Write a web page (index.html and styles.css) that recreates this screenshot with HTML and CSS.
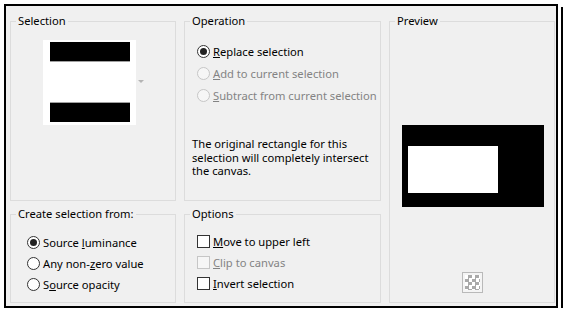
FILE: index.html
```html
<!DOCTYPE html>
<html lang="en">
<head>
  <meta charset="UTF-8" />
  <title>Selection From Mask</title>
  <link rel="stylesheet" href="styles.css">
</head>
<body>
  <div class="dialog">
    <div class="groups">
      <fieldset class="group g-selection">
        <legend>Selection</legend>
        <div class="selection-body">
          <div class="thumb">
            <div class="bar bar-top"></div>
            <div class="gap"></div>
            <div class="bar bar-bottom"></div>
          </div>
          <span class="drop-arrow"></span>
        </div>
      </fieldset>

      <fieldset class="group g-operation">
        <legend>Operation</legend>
        <div class="operation-body">
          <div class="choices wide">
            <label class="choice"><span class="radio checked"></span><span><u>R</u>eplace selection</span></label>
            <label class="choice disabled"><span class="radio"></span><span><u>A</u>dd to current selection</span></label>
            <label class="choice disabled"><span class="radio"></span><span><u>S</u>ubtract from current selection</span></label>
          </div>
          <p class="info">The original rectangle for this<br>selection will completely intersect<br>the canvas.</p>
        </div>
      </fieldset>

      <fieldset class="group g-preview">
        <legend>Preview</legend>
        <div class="preview-body">
          <div class="preview-canvas">
            <div class="preview-sel"></div>
          </div>
          <button class="checker" title="Transparency"></button>
        </div>
      </fieldset>

      <fieldset class="group g-create">
        <legend>Create selection from:</legend>
        <div class="choices create-body">
          <label class="choice"><span class="radio checked"></span><span>Source <u>l</u>uminance</span></label>
          <label class="choice"><span class="radio"></span><span>Any non-<u>z</u>ero value</span></label>
          <label class="choice"><span class="radio"></span><span>S<u>o</u>urce opacity</span></label>
        </div>
      </fieldset>

      <fieldset class="group g-options">
        <legend>Options</legend>
        <div class="choices options-body">
          <label class="choice"><span class="check"></span><span><u>M</u>ove to upper left</span></label>
          <label class="choice disabled"><span class="check"></span><span><u>C</u>lip to canvas</span></label>
          <label class="choice"><span class="check"></span><span><u>I</u>nvert selection</span></label>
        </div>
      </fieldset>
    </div>
  </div>
</body>
</html>
```

FILE: styles.css
```css
body {
  margin: 0;
  background: #fff;
  font-family: "Noto Sans", "Liberation Sans", sans-serif;
  font-size: 11.2px;
  color: #000;
}

.dialog {
  box-sizing: border-box;
  width: 554px;
  height: 304px;
  margin: 4px 0 0 4px;
  border: 2px solid #000;
  background: #f0f0f0;
  box-shadow: 3px 1px 0 #fff, 5px 3px 0 #000;
}

.groups {
  display: grid;
  grid-template-columns: 166px 197px 166px;
  grid-template-rows: 188px 97px;
  column-gap: 8px;
  row-gap: 5px;
  padding: 7px 1px 3px 4px;
}

.group {
  margin: 0;
  padding: 0;
  min-width: 0;
  border: 1px solid #dcdcdc;
}

.group legend {
  margin-left: 5px;
  padding: 0 2px;
  line-height: 16px;
}

.g-selection { grid-column: 1; grid-row: 1; }
.g-operation { grid-column: 2; grid-row: 1; }
.g-preview   { grid-column: 3; grid-row: 1 / span 2; }
.g-create    { grid-column: 1; grid-row: 2; }
.g-options   { grid-column: 2; grid-row: 2; }

/* selection thumbnail */
.selection-body {
  display: flex;
  align-items: center;
  gap: 2px;
  padding: 11px 0 0 32px;
}

.thumb {
  box-sizing: border-box;
  width: 93px;
  height: 85px;
  padding: 2px 6px 3px 7px;
  background: #fff;
}

.bar {
  height: 19px;
  background: #000;
}

.bar-top { border-bottom: 1px solid #a0a0a0; }
.bar-bottom { border-top: 1px solid #a0a0a0; }

.gap { height: 40px; }

.drop-arrow {
  width: 0;
  height: 0;
  margin-top: -3px;
  border-left: 3px solid transparent;
  border-right: 3px solid transparent;
  border-top: 3px solid #b4b4b4;
}

/* radios and checkboxes */
.choices {
  display: flex;
  flex-direction: column;
}

.choice {
  display: flex;
  align-items: center;
  gap: 3px;
  height: 21px;
  white-space: nowrap;
}

.choices.wide .choice { height: 22px; }

.choice u { text-underline-offset: 1px; }

.disabled { color: #838383; }

.radio,
.check {
  box-sizing: border-box;
  width: 13px;
  height: 13px;
  flex: none;
  border: 1px solid #333;
  background: #fff;
}

.radio {
  border-radius: 50%;
  display: flex;
  align-items: center;
  justify-content: center;
}

.radio.checked::after {
  content: "";
  width: 7px;
  height: 7px;
  border-radius: 50%;
  background: #222;
}

.disabled .radio,
.disabled .check {
  border-color: #c6c6c6;
  background: #f6f6f6;
}

.operation-body {
  padding: 11px 0 0 7px;
}

.operation-body .choices { padding-left: 5px; }

.info {
  margin: 31px 0 0;
  line-height: 13.5px;
}

.create-body { padding: 10px 0 0 16px; }
.options-body { padding: 9px 0 0 12px; }

/* preview */
.preview-body {
  display: flex;
  flex-direction: column;
  align-items: center;
  padding: 96px 0 0 1px;
}

.preview-canvas {
  box-sizing: border-box;
  width: 142px;
  height: 82px;
  padding: 21px 0 0 6px;
  background: #000;
}

.preview-sel {
  width: 90px;
  height: 47px;
  background: #fff;
}

.checker {
  width: 21px;
  height: 21px;
  margin-top: 65px;
  padding: 0;
  border: 1px solid #b9b9b9;
  background: #fff;
  box-shadow: inset 0 0 0 2px #f4f4f4;
  background-image: repeating-conic-gradient(#a9a9a9 0 25%, #fff 0 50%);
  background-size: 7px 7px;
  background-position: 2px 2px;
}
```
